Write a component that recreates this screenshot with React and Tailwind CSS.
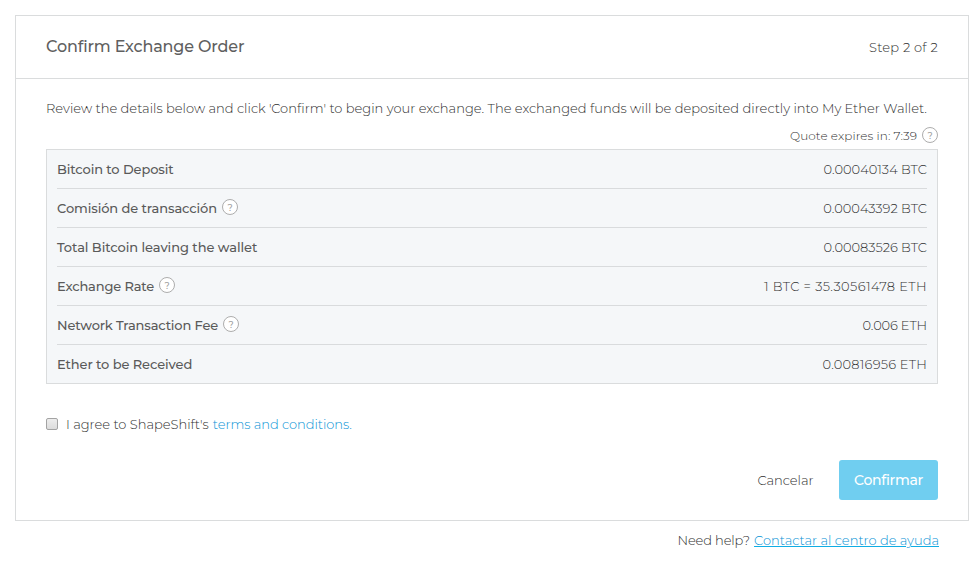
import { useState } from "react";
import clsx from "clsx";

const ROWS = [
  {
    label: "Bitcoin to Deposit",
    value: "0.00040134 BTC",
    labelClass: "tracking-[-0.1px]",
    valueClass: "tracking-[0.022px]",
  },
  {
    label: "Comisión de transacción",
    value: "0.00043392 BTC",
    help: true,
    labelClass: "tracking-[-0.092px]",
    valueClass: "tracking-normal",
  },
  {
    label: "Total Bitcoin leaving the wallet",
    value: "0.00083526 BTC",
    labelClass: "tracking-[-0.055px]",
    valueClass: "tracking-normal",
  },
  {
    label: "Exchange Rate",
    value: "1 BTC = 35.30561478 ETH",
    help: true,
    labelClass: "tracking-[-0.15px]",
    valueClass: "tracking-[0.4px]",
  },
  {
    label: "Network Transaction Fee",
    value: "0.006 ETH",
    help: true,
    labelClass: "tracking-[-0.151px]",
    valueClass: "tracking-[-0.15px]",
  },
  {
    label: "Ether to be Received",
    value: "0.00816956 ETH",
    labelClass: "tracking-[-0.09px]",
    valueClass: "tracking-[0.217px]",
  },
];

function HelpIcon() {
  return (
    <span className="flex h-4 w-4 shrink-0 items-center justify-center rounded-full border border-[#adadad] bg-white font-['Montserrat','Inter',sans-serif] text-[9px] font-medium leading-none tracking-normal text-[#a0a0a0]">
      ?
    </span>
  );
}

function OrderRow({ row, last }) {
  return (
    <li
      className={clsx(
        "flex items-center justify-between",
        last ? "h-[38px]" : "h-[39px] border-b border-[#d9dbdd]"
      )}
    >
      <div className="flex items-center gap-[5px]">
        <span className={clsx("font-medium text-[#5a5a5a]", row.labelClass)}>
          {row.label}
        </span>
        {row.help && (
          <span className="-mt-0.5">
            <HelpIcon />
          </span>
        )}
      </div>
      <span className={row.valueClass}>{row.value}</span>
    </li>
  );
}

export default function App() {
  const [agreed, setAgreed] = useState(false);

  return (
    <div className="h-[568px] w-[970px] overflow-hidden bg-white pl-[15px] pt-[15px] font-['Montserrat','Inter',sans-serif] text-[13px] font-light leading-[18px] text-[#303030]">
      <section className="flex h-[506px] w-[954px] flex-col border border-[#dadcdd]">
        <header className="flex h-[63px] items-center justify-between border-b border-[#dadcdd] px-[30px]">
          <h1 className="text-base font-medium tracking-[-0.15px] text-[#5f5f5f]">
            Confirm Exchange Order
          </h1>
          <span className="tracking-[0.239px]">Step 2 of 2</span>
        </header>

        <div className="flex flex-1 flex-col px-[30px] pt-5">
          <p className="whitespace-nowrap tracking-[0.012px]">
            Review the details below and click 'Confirm' to begin your exchange. The
            exchanged funds will be deposited directly into My Ether Wallet.
          </p>

          <div className="mt-[9px] flex h-[18px] items-center justify-end gap-[5px] text-xs">
            <span className="pt-0.5 tracking-[0.088px]">Quote expires in: 7:39</span>
            <HelpIcon />
          </div>

          <ul className="mt-[5px] w-[892px] border border-[#dadcdd] bg-[#f5f7f9] px-2.5">
            {ROWS.map((row, i) => (
              <OrderRow key={row.label} row={row} last={i === ROWS.length - 1} />
            ))}
          </ul>

          <label className="mt-[31px] flex items-center">
            <input
              type="checkbox"
              checked={agreed}
              onChange={(e) => setAgreed(e.target.checked)}
              className="h-3 w-3 appearance-none rounded-[2px] border border-[#a3a3a3] bg-linear-to-b from-[#ededed] to-[#dcdcdc] checked:bg-[#10ade4]"
            />
            <span className="ml-2">I agree to ShapeShift's</span>
            <a className="ml-1 tracking-[-0.03px] text-[#0a94d6]">
              terms and conditions.
            </a>
          </label>

          <div className="mt-[27px] flex items-center justify-end gap-[25.5px]">
            <button type="button" className="tracking-[-0.043px]">
              Cancelar
            </button>
            <button
              type="button"
              className="h-10 w-[99px] rounded-[3px] bg-[#70cef0] text-sm font-medium tracking-[-0.28px] text-white"
            >
              Confirmar
            </button>
          </div>
        </div>
      </section>

      <footer className="mt-[10px] flex justify-end gap-1 pr-[31px]">
        <span className="tracking-[-0.12px]">Need help?</span>
        <a className="text-[#0a94d6] underline decoration-[#10ade4] underline-offset-1">
          Contactar al centro de ayuda
        </a>
      </footer>
    </div>
  );
}
